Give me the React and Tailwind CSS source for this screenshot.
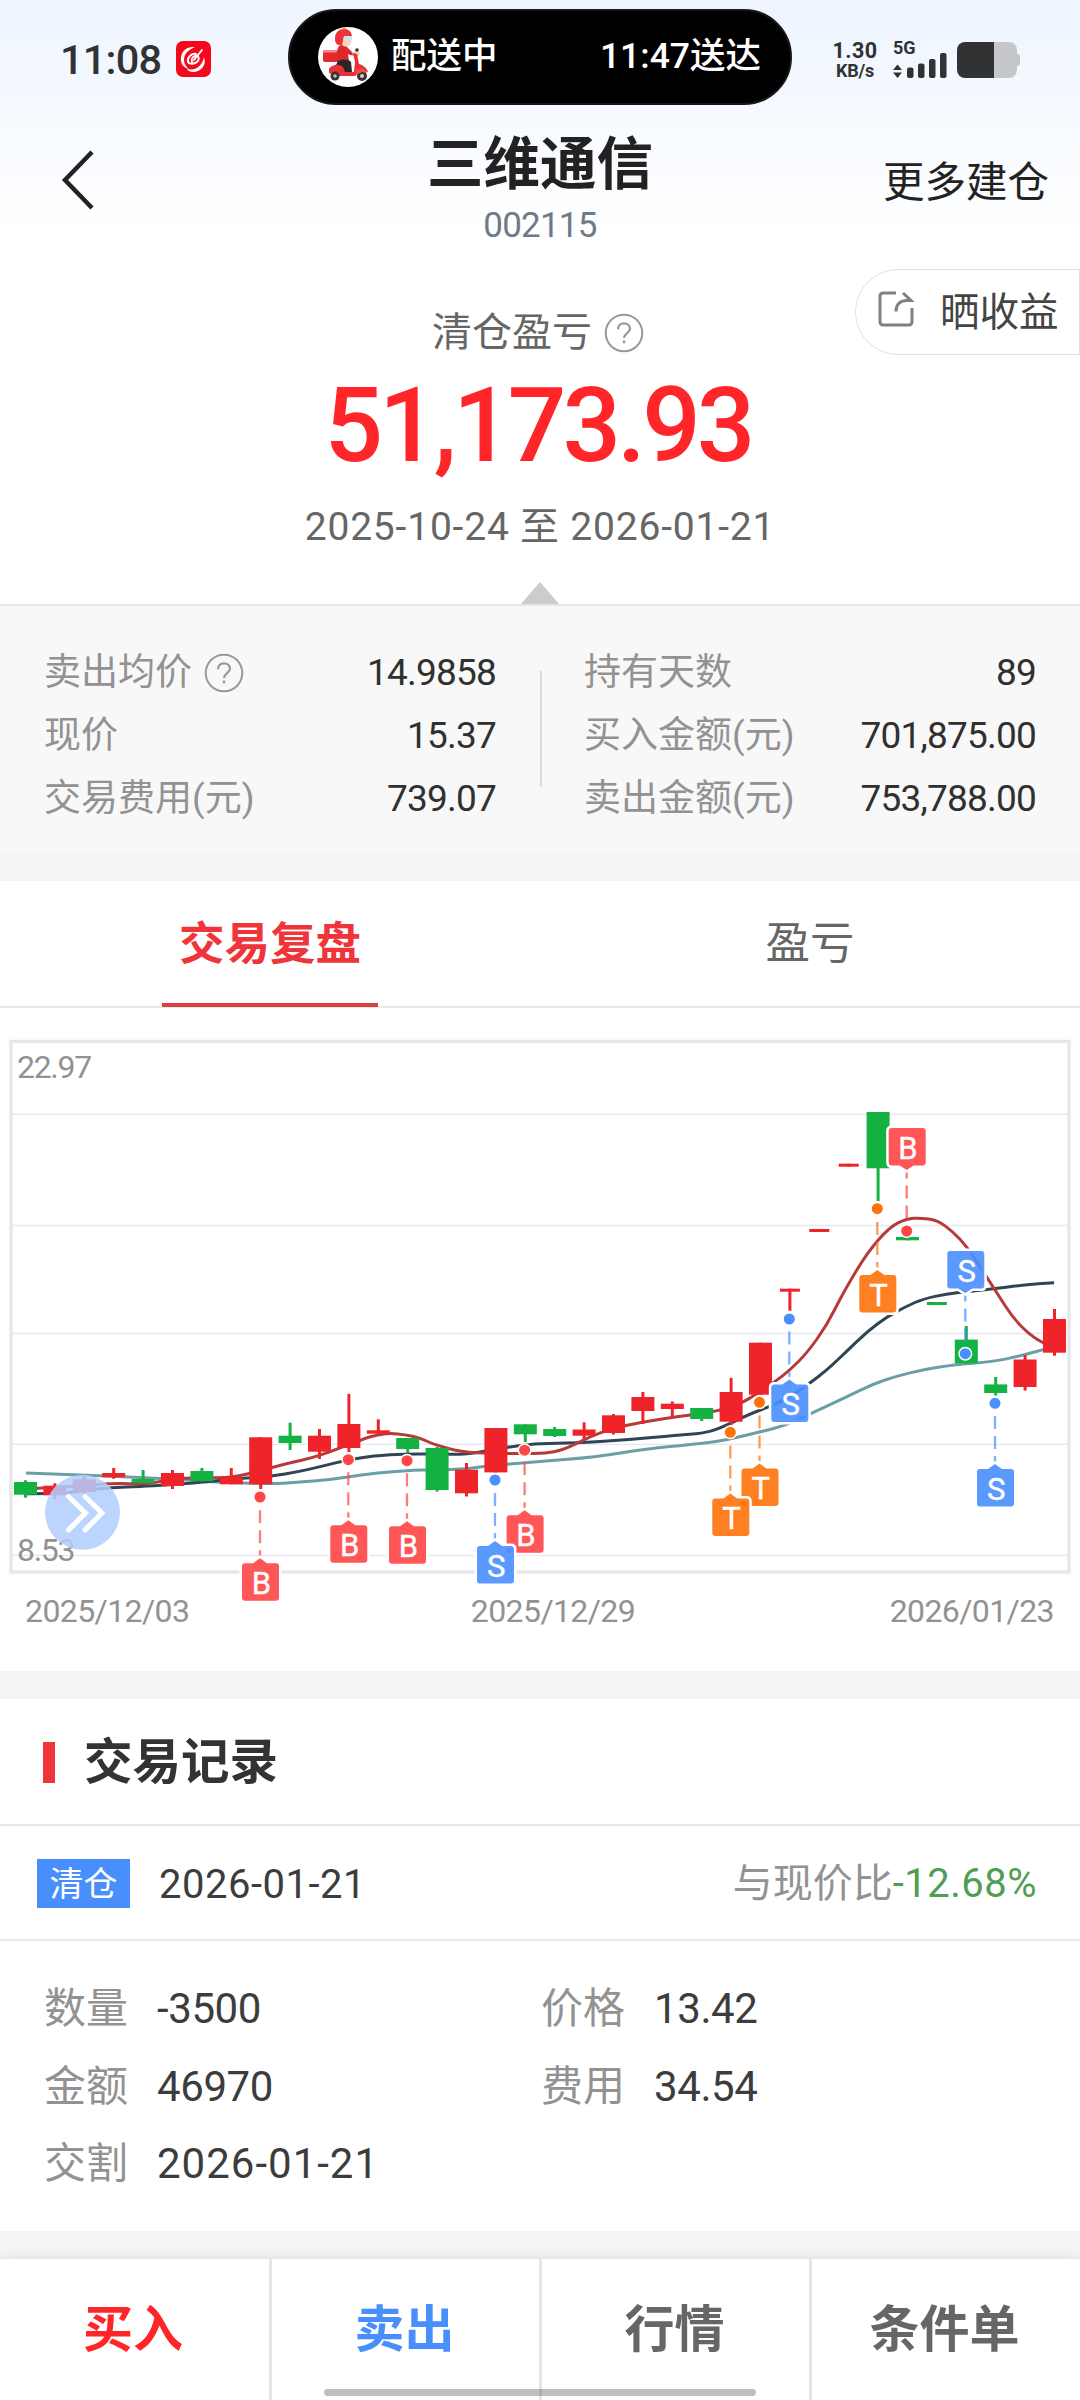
const UP = '#ef232a'
const DOWN = '#14b143'

// colour, body top, body bottom, high, low
const candles = [
  [DOWN, 1482, 1494.7, 1480.3, 1497.7],
  [UP, 1485.7, 1495.3, 1483.3, 1499],
  [UP, 1479.3, 1492, 1477, 1494.7],
  [UP, 1473, 1477.3, 1468, 1478.7],
  [DOWN, 1479, 1483, 1470, 1483],
  [UP, 1473, 1486, 1470, 1489],
  [DOWN, 1471, 1481.3, 1468, 1481.3],
  [UP, 1477.3, 1484.3, 1468, 1484.3],
  [UP, 1437.3, 1484.3, 1437.3, 1489],
  [DOWN, 1435.7, 1443, 1422.7, 1450],
  [UP, 1435.7, 1451.7, 1429, 1459],
  [UP, 1424, 1448, 1394, 1452],
  [UP, 1430.3, 1433.7, 1419.3, 1433.7],
  [DOWN, 1438, 1449, 1438, 1453],
  [DOWN, 1448, 1490, 1447, 1491.5],
  [UP, 1469.7, 1493.3, 1463, 1496.5],
  [UP, 1428, 1472.4, 1428, 1472.4],
  [DOWN, 1424.3, 1434.3, 1424.3, 1442],
  [DOWN, 1429, 1436, 1427, 1437],
  [UP, 1429.5, 1435.7, 1422.3, 1439.5],
  [UP, 1415.3, 1433, 1414, 1434.5],
  [UP, 1397, 1411, 1392, 1424],
  [UP, 1403.7, 1409, 1401.5, 1417],
  [DOWN, 1408, 1419, 1408, 1421],
  [UP, 1392, 1421.7, 1378, 1425],
  [UP, 1342.7, 1394.7, 1342.7, 1394.7],
  [UP, 1288.7, 1291.7, 1288.7, 1310.7],
  [UP, 1229, 1232, 1229, 1232],
  [UP, 1163.7, 1166.7, 1163.7, 1166.7],
  [DOWN, 1112, 1168.3, 1112, 1201],
  [DOWN, 1237, 1240.3, 1237, 1240.3],
  [DOWN, 1302, 1305, 1302, 1305],
  [DOWN, 1339.6, 1363.3, 1326, 1363.3],
  [DOWN, 1384.4, 1393, 1377, 1395.5],
  [UP, 1359.5, 1387, 1355, 1390.5],
  [UP, 1319, 1352.7, 1309, 1355.7],
]

const ma5 = [[26,1489],[36,1488.3],[75,1486],[113,1483.3],[143,1484],[160,1481.7],[183,1477.7],[227,1478],[248,1474],[273,1467.3],[290,1462.7],[313,1457.7],[333,1450.7],[363,1439],[378,1434.5],[390,1433.3],[405,1434.5],[420,1438],[434,1444.5],[461,1452],[492,1453.6],[540,1453.6],[554,1452],[567.5,1448],[592,1435.7],[614,1428],[643,1422],[678,1416.5],[691.5,1415],[720,1410.7],[742,1402.7],[755,1395],[775,1381.7],[790,1370],[807,1353],[827,1325],[843,1293],[867,1253],[890,1226.7],[907,1218.7],[920,1218],[937,1220],[953,1231.7],[967,1246.7],[980,1266.7],[997,1293],[1013,1318],[1030,1335],[1045,1344],[1054,1347]]
const ma10 = [[26,1493.7],[63,1494],[97,1488.7],[127,1487],[153,1486],[187,1483.7],[213,1481],[247,1478],[273,1476],[297,1472],[320,1466.7],[347,1460],[373,1456],[407,1453.7],[440,1454.2],[465,1454.2],[482,1451.7],[516.5,1445.6],[540,1443.7],[574,1443],[626,1440],[678,1435],[702,1433.4],[719,1428.8],[750,1413.8],[770,1406.7],[793,1395],[810,1383],[827,1370],[847,1351],[867,1331.7],[887,1316.7],[907,1306],[923,1299],[947,1293.7],[967,1291.7],[993,1289],[1023,1285],[1054,1282.7]]
const ma20 = [[26,1473],[80,1475],[133,1477],[187,1480],[213,1482],[273,1484],[300,1482],[333,1479.3],[363,1474.7],[393,1471.3],[420,1470],[461,1469.7],[492,1465.5],[540,1461.7],[595,1457],[643,1449.4],[702,1443.3],[726,1440],[760,1432],[787,1425],[812,1413],[847,1396.7],[873,1384],[897,1376],[923,1369.7],[953,1365],[993,1361.7],[1020,1356],[1045,1349],[1054,1347]]

// type, x, dot y, top of the tag
const marks = [
  { type: 'B', x: 260, dot: 1497, top: 1563.3 },
  { type: 'B', x: 348.3, dot: 1459.7, top: 1525.3 },
  { type: 'B', x: 407, dot: 1460.7, top: 1526.3 },
  { type: 'B', x: 524.6, dot: 1450.2, top: 1515.3 },
  { type: 'S', x: 495, dot: 1480, top: 1546 },
  { type: 'T', x: 759.5, dot: 1402.3, top: 1468.5 },
  { type: 'T', x: 730.3, dot: 1432.3, top: 1498.5 },
  { type: 'S', x: 789.3, dot: 1319, top: 1384.5 },
  { type: 'T', x: 877.3, dot: 1208.7, top: 1275 },
  { type: 'B', x: 906.7, dot: 1231, top: 1128, above: true },
  { type: 'S', x: 965.3, dot: 1353.7, top: 1251, above: true },
  { type: 'S', x: 995, dot: 1403.3, top: 1469 },
]

const markColor = { B: '#ff4545', S: '#488fff', T: '#ff720a' }

const stats = [
  [
    { label: '卖出均价', value: '14.9858', help: true },
    { label: '现价', value: '15.37' },
    { label: '交易费用(元)', value: '739.07' },
  ],
  [
    { label: '持有天数', value: '89' },
    { label: '买入金额(元)', value: '701,875.00' },
    { label: '卖出金额(元)', value: '753,788.00' },
  ],
]

const details = [
  ['数量', '-3500'],
  ['价格', '13.42'],
  ['金额', '46970'],
  ['费用', '34.54'],
  ['交割', '2026-01-21'],
]

const actions = [
  { label: '买入', cls: 'text-[#ff2529]' },
  { label: '卖出', cls: 'border-l-[3px] border-[#e6e6e6] text-[#488ffd]' },
  { label: '行情', cls: 'border-l-[3px] border-[#e6e6e6] text-[#666]' },
  { label: '条件单', cls: 'border-l-[3px] border-[#e6e6e6] text-[#666]' },
]

// smooth curve through the midpoints
function toPath(pts) {
  let d = `M${pts[0][0]} ${pts[0][1]}`
  for (let i = 1; i < pts.length - 1; i++) {
    const mx = (pts[i][0] + pts[i + 1][0]) / 2
    const my = (pts[i][1] + pts[i + 1][1]) / 2
    d += ` Q${pts[i][0]} ${pts[i][1]} ${mx} ${my}`
  }
  const last = pts[pts.length - 1]
  return `${d} L${last[0]} ${last[1]}`
}

function HelpIcon() {
  return (
    <svg width="40" height="40" viewBox="0 0 40 40" fill="none" stroke="#999" strokeWidth="2" className="shrink-0">
      <circle cx="20" cy="20" r="18.3" />
      <path d="M14 16.3c0-3.8 2.6-6 6-6s6 2.2 6 5.4c0 4.2-6 4.6-6 9.3" strokeWidth="2.3" />
      <path d="M20 27.5v2.8" strokeWidth="2.5" />
    </svg>
  )
}

function Rider() {
  return (
    <svg width="60" height="60" viewBox="0 0 60 60">
      <circle cx="30" cy="30" r="30" fill="#fff" />
      <path d="M5 24q0-1 1-1h15v12H7q-2 0-2-2z" fill="#e32a2c" />
      <path d="M5 24q0-1 1-1h15v2.5H5z" fill="#f9888a" />
      <path d="M21 19c3-2 7-1 9 2l4 4 6 1v3l-8-1-2-1 1 7H19c-1-6 0-12 2-15z" fill="#dc272b" />
      <path d="M34 25l5-1 3 2-1 3-6-1z" fill="#f7cdbb" />
      <path d="M20 34c5-2 10-2 13 1l1 10h-9l-2-5-7 2z" fill="#2c2626" />
      <path d="M11 42c2-4 10-6 14-2l2 5h9l1-10-2-9 4 1 2 10c4 1 8 4 9 8l-7-1-6 5H20l-9-3z" fill="#ea3034" />
      <circle cx="17" cy="49" r="4.5" fill="#3a3535" />
      <circle cx="17" cy="49" r="1.8" fill="#bbb" />
      <circle cx="44" cy="49" r="5" fill="#3a3535" />
      <circle cx="44" cy="49" r="2" fill="#ccc" />
      <path d="M38 43c3-3 9-2 11 3l-5-1-6 3z" fill="#f04a4c" />
      <circle cx="28" cy="14" r="5.5" fill="#f7d3c3" />
      <path d="M17 12c0-7 4-10 9-10 5 0 8 3 8 8l-8 0-2 8c-4 1-7-1-7-6z" fill="#ee3235" />
      <path d="M26 9h8v4h-9z" fill="#c8e7e8" />
      <circle cx="39" cy="23" r="1.8" fill="#333" />
      <path d="M23 2.5l3-2 3 1.5z" fill="#f59a2c" />
    </svg>
  )
}

function StatusBar() {
  return (
    <div className="flex h-[114px] items-center pl-[60px]">
      <div className="flex w-[228px] shrink-0 items-center pt-1">
        <span className="w-[116px] pt-0.5 text-[41.5px] font-medium leading-none tracking-[-0.8px] text-[#303234]">11:08</span>
        <svg width="35" height="36" viewBox="0 0 35 36">
          <rect width="35" height="36" rx="7" fill="#f5081c" />
          <path d="M19 6C10 5 4 11 5 20c1 5 4 7 8 8-5-4-6-9-4-14 2-4 6-6 10-8z" fill="#fff" />
          <path d="M28 16c3 8-3 15-11 15-3 0-5-1-6-3 8 2 15-2 17-12z" fill="#fff" />
          <g fill="none" stroke="#fff" strokeLinecap="round">
            <path d="M26 9l-8 10" strokeWidth="2" />
            <path d="M20 13c-5-1-9 4-8 8 2 3 7 2 10-1 2-3 0-6-3-5s-4 4-3 6" strokeWidth="2" />
          </g>
        </svg>
      </div>
      <div className="flex h-24 w-[504px] shrink-0 items-center rounded-full border-2 border-[#17181a] bg-black pl-7 pr-[29px] text-[35px] font-medium leading-none text-white">
        <Rider />
        <span className="ml-[13px] text-[35.5px]">配送中</span>
        <span className="ml-auto text-[35.5px]">11:47送达</span>
      </div>
      <div className="ml-10 w-[46px] shrink-0 pt-1.5 text-center font-bold leading-none text-[#303234]">
        <div className="text-[21.5px] tracking-[0.5px]">1.30</div>
        <div className="text-[18px] tracking-[-0.2px]">KB/s</div>
      </div>
      <div className="ml-[15px] mt-1 w-[54px] shrink-0 text-[#303234]">
        <div className="h-4 text-[18px] font-bold leading-4">5G</div>
        <svg width="54" height="26" viewBox="0 0 54 26" fill="#303234" className="-mt-1">
          <path d="M0 18l4.5-5.5L9 18zM0 20.5h9L4.5 26z" />
          <rect x="14" y="15.5" width="6.5" height="10.5" rx="2" />
          <rect x="25" y="11.5" width="6.5" height="14.5" rx="2" />
          <rect x="36" y="7" width="6.5" height="19" rx="2" />
          <rect x="47" y="1" width="6.5" height="25" rx="2" />
        </svg>
      </div>
      <svg width="64" height="36" viewBox="0 0 64 36" className="ml-2.5 mt-1.5 shrink-0">
        <path d="M37 0h15a8 8 0 018 8v4c2 0 3 1 3 3v6c0 2-1 3-3 3v4a8 8 0 01-8 8H37z" fill="#c5c6c9" />
        <path d="M37 0v36H8a8 8 0 01-8-8V8a8 8 0 018-8z" fill="#303234" />
      </svg>
    </div>
  )
}

function Mark({ type, x, dot, top, above }) {
  const c = markColor[type]
  const l = x - 18
  const r = x + 19
  const b = top + 37.5
  // tag outline with a small pointer towards the dot
  const d = above
    ? `M${l + 3} ${top}H${r - 3}q3 0 3 3V${b - 3}q0 3 -3 3H${x + 7}L${x} ${b + 4.5}L${x - 7} ${b}H${l + 3}q-3 0 -3 -3V${top + 3}q0 -3 3 -3z`
    : `M${l + 3} ${top}H${x - 7}L${x} ${top - 5}L${x + 7} ${top}H${r - 3}q3 0 3 3V${b - 3}q0 3 -3 3H${l + 3}q-3 0 -3 -3V${top + 3}q0 -3 3 -3z`
  return (
    <g>
      <line x1={x} x2={x} y1={above ? b : top} y2={dot} stroke={c} strokeOpacity="0.7" strokeWidth="2.3" strokeDasharray="13 7" />
      <circle cx={x} cy={dot} r="6.3" fill={c} stroke="#fff" strokeWidth="1.5" />
      <path d={d} fill="none" stroke="#fff" strokeWidth="5" />
      <path d={d} fill={c} fillOpacity="0.9" />
      <text x={x + 1.3} y={top + 30.5} textAnchor="middle" fill="#fff" stroke="#fff" strokeWidth="0.4" className="text-[31px]">{type}</text>
    </g>
  )
}

function Chart() {
  return (
    <svg width="1080" height="572" viewBox="0 1030 1080 572" className="block">
      {[1114.3, 1225.5, 1333.5, 1444.3, 1555.5].map((y) => (
        <line key={y} x1="12" x2="1068" y1={y} y2={y} stroke="#e6e7f1" strokeWidth="1.3" />
      ))}
      <rect x="11" y="1041.5" width="1058" height="530.5" fill="none" stroke="#e6e7ea" strokeWidth="3.5" />
      <g fill="#929292" className="text-[32px] tracking-[-1.3px]">
        <text x="17" y="1077.5">22.97</text>
        <text x="17" y="1560.5">8.53</text>
      </g>
      <g fill="none" strokeWidth="3">
        <path d={toPath(ma20)} stroke="#6a9fa6" />
        <path d={toPath(ma10)} stroke="#2f4554" />
        <path d={toPath(ma5)} stroke="#b73a38" />
      </g>
      {candles.map(([color, t, b, high, low], i) => {
        const x = 25.5 + i * 29.4
        const half = b - t < 3.1 ? 10 : 11.5
        return (
          <g key={i} fill={color}>
            <rect x={x - 1.5} y={high} width="3" height={low - high} />
            <rect x={x - half} y={t} width={half * 2} height={b - t} />
          </g>
        )
      })}
      {marks.map((m) => <Mark key={m.x} {...m} />)}
      <circle cx="82.5" cy="1512.3" r="37.5" fill="#b1ceff" fillOpacity="0.86" />
      <path d="M68.5 1496.5l17 16.5-17 17M85 1496.5l17 16.5-17 17" fill="none" stroke="#fff" strokeWidth="5" strokeLinecap="round" />
    </svg>
  )
}

function StatColumn({ rows, cls }) {
  return (
    <div className={cls}>
      {rows.map((s) => (
        <div key={s.label} className="flex items-center justify-between">
          <span className="flex items-center gap-3 text-[#929292]">
            {s.label}
            {s.help && <HelpIcon />}
          </span>
          <span className="tracking-[-0.8px] text-[#303030]">{s.value}</span>
        </div>
      ))}
    </div>
  )
}

export default function App() {
  return (
    <div className="h-[2400px] w-[1080px] overflow-hidden bg-white font-['Roboto','Noto_Sans_CJK_SC',sans-serif] text-[#333]">
      <header className="h-[604px] bg-gradient-to-b from-[#eef5ff] to-white to-[240px]">
        <StatusBar />

        <div className="flex h-[140px] items-center justify-between pl-[60px] pr-[31px]">
          <svg width="36" height="60" viewBox="0 0 36 60" fill="none" stroke="#222" strokeWidth="4.5" className="-mt-2">
            <path d="M32 2L5 30l27 28" />
          </svg>
          <div className="ml-[101px] pt-2.5 text-center">
            <h1 className="text-[56.5px] font-bold leading-[64px] text-[#222]">三维通信</h1>
            <div className="mt-[9px] text-[35px] leading-[40px] tracking-[-0.8px] text-[#6e7b87]">002115</div>
          </div>
          <span className="-mt-0.5 text-[41.5px] leading-none text-[#222]">更多建仓</span>
        </div>

        <div className="flex justify-end">
          <button className="mt-[15px] flex h-[86px] w-[225px] items-center rounded-l-full border border-[#e0e0e0] pl-[22px] text-[39.5px] leading-none text-[#444]">
            <svg width="36" height="36" viewBox="0 0 36 36" fill="none" stroke="#808080" strokeWidth="3" className="-mt-1.5 shrink-0">
              <path d="M18 2H5a3 3 0 00-3 3v26a3 3 0 003 3h26a3 3 0 003-3V17" />
              <path d="M25 2l8 7.5H29c-7 0-11 4-11 11" />
            </svg>
            <span className="ml-[26px] whitespace-nowrap pt-0.5">晒收益</span>
          </button>
        </div>

        <div className="-mt-[42px] flex flex-col items-center">
          <div className="-ml-1 flex h-10 items-center gap-3 text-[40px] leading-none text-[#666]">
            清仓盈亏
            <HelpIcon />
          </div>
          <div className="mt-[22px] pr-1 text-[103px] font-medium leading-[102px] tracking-[-3.8px] text-[#ff2529]">51,173.93</div>
          <div className="mt-[24px] text-[39px] leading-[52px] tracking-[0.8px] text-[#666]">2025-10-24 至 2026-01-21</div>
          <svg width="38" height="22" viewBox="0 0 38 22" className="mt-[29px]">
            <path d="M19 0l19 22H0z" fill="#ccc" />
          </svg>
        </div>
      </header>

      <section className="flex h-[248px] border-t-2 border-[#e6e6e6] bg-[#f8f8f8] px-11 pt-[35px] text-[37px] leading-[63px]">
        <StatColumn rows={stats[0]} cls="w-[452px]" />
        <div className="ml-11 mt-[30px] h-[116px] w-0.5 bg-[#dcdcdc]" />
        <StatColumn rows={stats[1]} cls="ml-[42px] flex-1" />
      </section>
      <div className="h-[29px] bg-[#f4f4f4]" />

      <nav className="flex h-[127px] border-b-2 border-[#e8e8e8] text-[45.5px] leading-none">
        <div className="flex flex-1 justify-center">
          <span className="-mb-px flex w-[216px] justify-center border-b-4 border-[#dc3e43] pt-[41px] font-bold text-[#f0353a]">交易复盘</span>
        </div>
        <div className="flex flex-1 justify-center pt-[41px] text-[44.5px] text-[#666]">盈亏</div>
      </nav>

      <section className="h-[663px] pt-[22px]">
        <Chart />
        <div className="-mt-[9px] flex justify-between pl-[25px] pr-[26px] text-[32px] leading-[36px] tracking-[-0.6px] text-[#929292]">
          <span>2025/12/03</span>
          <span className="ml-[27px]">2025/12/29</span>
          <span>2026/01/23</span>
        </div>
      </section>
      <div className="h-7 bg-[#f4f4f4]" />

      <section className="h-[532px]">
        <div className="flex h-[127px] items-center border-b-2 border-[#e8e8e8] pl-[43px]">
          <div className="mt-0.5 h-[41px] w-3 bg-[#f0353a]" />
          <h2 className="ml-[29px] pt-[3px] text-[48.5px] font-bold leading-none">交易记录</h2>
        </div>
        <div className="flex h-[115px] items-center border-b-2 border-[#e8e8e8] pl-[37px] pr-[43px] pt-0.5 text-[40px] leading-none">
          <span className="flex h-[49px] w-[93px] items-center justify-center bg-[#488ffd] text-[34px] text-white">清仓</span>
          <span className="ml-[29px] pt-0.5 tracking-[0.5px] text-[#3c3c3c]">2026-01-21</span>
          <span className="ml-auto text-[#929292]">
            与现价比<span className="tracking-[0.5px] text-[#4f9f51]">-12.68%</span>
          </span>
        </div>
        <div className="grid grid-cols-[497px_1fr] pl-11 pt-[29px] text-[42px] leading-[77.5px]">
          {details.map(([label, value]) => (
            <div key={label} className="flex">
              <span className="w-[113px] text-[#929292]">{label}</span>
              <span className={label === '交割' ? 'tracking-[1px] text-[#3c3c3c]' : 'tracking-[-0.4px] text-[#3c3c3c]'}>{value}</span>
            </div>
          ))}
        </div>
      </section>
      <div className="h-7 bg-[#f4f4f4]" />

      <footer className="relative grid h-[141px] grid-cols-4 shadow-[0_-2px_8px_rgba(0,0,0,0.08)]">
        {actions.map((a) => (
          <button key={a.label} className={`-ml-px pr-[3px] text-[50px] font-bold leading-none ${a.cls}`}>{a.label}</button>
        ))}
        <div className="absolute bottom-1 left-[324px] h-[7px] w-[432px] rounded-full bg-black/25" />
      </footer>
    </div>
  )
}
